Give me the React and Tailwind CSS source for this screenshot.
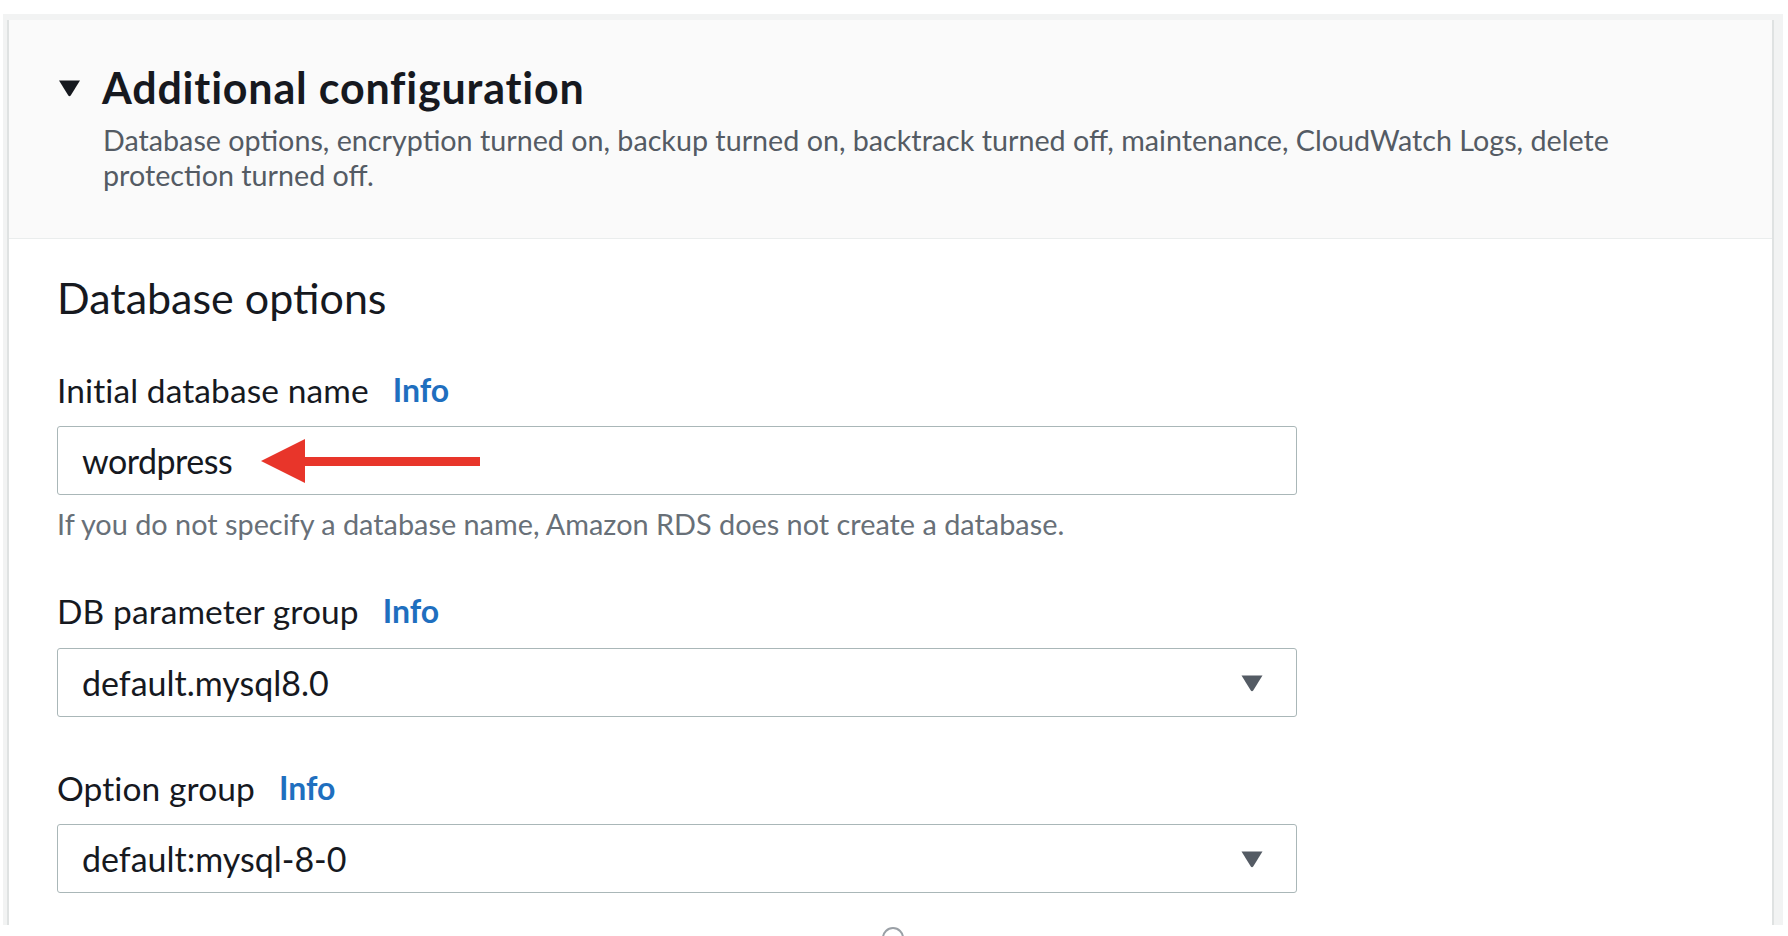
import React from "react";

const font = { fontFamily: "Lato, 'Open Sans', sans-serif" };

const Caret = ({ className }) => (
  <svg className={className} viewBox="0 0 24 18" width="24" height="18">
    <path d="M1.5 1.5 H22.5 L13.2 16.5 Q12 18 10.8 16.5 Z" fill="currentColor" strokeLinejoin="round" />
  </svg>
);

const Label = ({ text }) => (
  <div className="flex items-center h-[36px] leading-[36px] text-[#16191f]">
    <span className="text-[33.5px] tracking-[0.1px]">{text}</span>
    <span className="ml-[24px] text-[32px] font-bold text-[#1f6fbf]">Info</span>
  </div>
);

const Select = ({ value }) => (
  <div className="flex items-center justify-between w-[1240px] h-[69px] border border-[#aab7b8] rounded-[3px] bg-white pl-[24px] pr-[32px]">
    <span className="text-[34px] text-[#16191f]">{value}</span>
    <Caret className="w-[24px] h-[18px] text-[#545b64]" />
  </div>
);

export default function App() {
  return (
    <div className="relative w-[1788px] h-[936px] bg-white overflow-hidden" style={font}>
      <div className="ml-[3px] mt-[14px] w-[1780px] h-[911px] bg-[#f2f3f3] pt-[6px] pl-[4px] pr-[9px]">
        <div className="h-full bg-white border-l-2 border-r-2 border-[#dfe2e2]">
          {/* header */}
          <div className="h-[219px] bg-[#fafafa] border-b border-[#eaeded] pl-[48px] pt-[44px]">
            <div className="flex items-center h-[48px]">
              <Caret className="w-[25px] h-[18px] text-[#16191f]" />
              <h2 className="ml-[20px] text-[43px] leading-[48px] tracking-[0.8px] font-bold text-[#16191f]">
                Additional configuration
              </h2>
            </div>
            <p className="ml-[46px] mt-[11px] w-[1580px] text-[28.7px] leading-[35px] text-[#545b64]">
              Database options, encryption turned on, backup turned on, backtrack turned off, maintenance, CloudWatch Logs, delete protection turned off.
            </p>
          </div>

          {/* body */}
          <div className="pl-[48px] pt-[35px]">
            <h3 className="h-[48px] text-[43px] leading-[48px] text-[#16191f]">Database options</h3>

            <div className="mt-[50px]">
              <Label text="Initial database name" />
              <div className="relative mt-[18px] w-[1240px] h-[69px] border border-[#aab7b8] rounded-[3px] bg-white pl-[24px] flex items-center">
                <span className="text-[34px] tracking-[-0.5px] text-[#16191f]">wordpress</span>
                <svg className="absolute left-[203px] top-[12px]" width="220" height="44" viewBox="0 0 220 44">
                  <path d="M0 22 L44 0 L44 44 Z" fill="#e8352a" />
                  <rect x="43" y="18" width="176" height="9" fill="#e8352a" />
                </svg>
              </div>
              <p className="mt-[12px] h-[34px] text-[28.85px] leading-[34px] text-[#687078]">
                If you do not specify a database name, Amazon RDS does not create a database.
              </p>
            </div>

            <div className="mt-[52px]">
              <Label text="DB parameter group" />
              <div className="mt-[19px]">
                <Select value="default.mysql8.0" />
              </div>
            </div>

            <div className="mt-[53px]">
              <Label text="Option group" />
              <div className="mt-[18px]">
                <Select value="default:mysql-8-0" />
              </div>
            </div>
          </div>
        </div>
      </div>
      <div className="absolute left-[882px] top-[927px] w-[22px] h-[22px] rounded-full border-2 border-[#9aa0a6] bg-white" />
    </div>
  );
}
